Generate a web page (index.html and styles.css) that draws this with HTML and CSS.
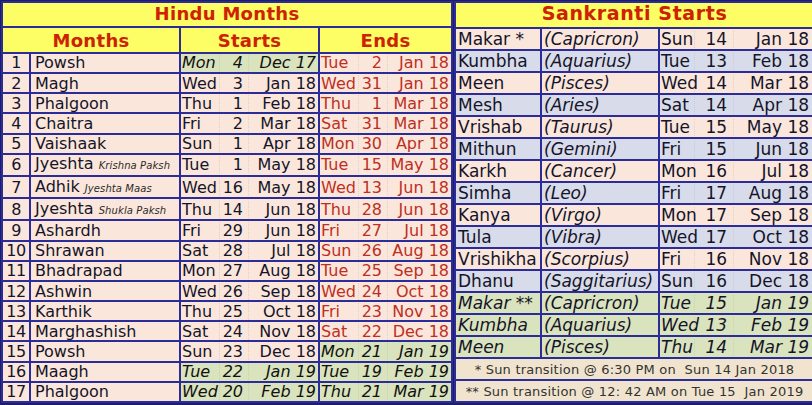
FILE: index.html
```html
<!DOCTYPE html>
<html>
<head>
<meta charset="utf-8">
<link rel="stylesheet" href="styles.css">
</head>
<body>
<div class="sheet">
  <table class="months">
    <colgroup><col class="c-no"><col class="c-name"><col class="c-start"><col class="c-end"></colgroup>
    <tr class="title"><td colspan="4">Hindu Months</td></tr>
    <tr class="head"><td colspan="2">Months</td><td>Starts</td><td>Ends</td></tr>
    <tr><td class="no">1</td><td class="name">Powsh</td><td class="dt green"><div class="d"><span>Mon</span><span>4</span><span>Dec 17</span></div></td><td class="dt end"><div class="d"><span>Tue</span><span>2</span><span>Jan 18</span></div></td></tr>
    <tr><td class="no">2</td><td class="name">Magh</td><td class="dt"><div class="d"><span>Wed</span><span>3</span><span>Jan 18</span></div></td><td class="dt end"><div class="d"><span>Wed</span><span>31</span><span>Jan 18</span></div></td></tr>
    <tr><td class="no">3</td><td class="name">Phalgoon</td><td class="dt"><div class="d"><span>Thu</span><span>1</span><span>Feb 18</span></div></td><td class="dt end"><div class="d"><span>Thu</span><span>1</span><span>Mar 18</span></div></td></tr>
    <tr><td class="no">4</td><td class="name">Chaitra</td><td class="dt"><div class="d"><span>Fri</span><span>2</span><span>Mar 18</span></div></td><td class="dt end"><div class="d"><span>Sat</span><span>31</span><span>Mar 18</span></div></td></tr>
    <tr><td class="no">5</td><td class="name">Vaishaak</td><td class="dt"><div class="d"><span>Sun</span><span>1</span><span>Apr 18</span></div></td><td class="dt end"><div class="d"><span>Mon</span><span>30</span><span>Apr 18</span></div></td></tr>
    <tr><td class="no">6</td><td class="name">Jyeshta <small>Krishna Paksh</small></td><td class="dt"><div class="d"><span>Tue</span><span>1</span><span>May 18</span></div></td><td class="dt end"><div class="d"><span>Tue</span><span>15</span><span>May 18</span></div></td></tr>
    <tr><td class="no">7</td><td class="name">Adhik <small>Jyeshta Maas</small></td><td class="dt"><div class="d"><span>Wed</span><span>16</span><span>May 18</span></div></td><td class="dt end"><div class="d"><span>Wed</span><span>13</span><span>Jun 18</span></div></td></tr>
    <tr><td class="no">8</td><td class="name">Jyeshta <small>Shukla Paksh</small></td><td class="dt"><div class="d"><span>Thu</span><span>14</span><span>Jun 18</span></div></td><td class="dt end"><div class="d"><span>Thu</span><span>28</span><span>Jun 18</span></div></td></tr>
    <tr><td class="no">9</td><td class="name">Ashardh</td><td class="dt"><div class="d"><span>Fri</span><span>29</span><span>Jun 18</span></div></td><td class="dt end"><div class="d"><span>Fri</span><span>27</span><span>Jul 18</span></div></td></tr>
    <tr><td class="no">10</td><td class="name">Shrawan</td><td class="dt"><div class="d"><span>Sat</span><span>28</span><span>Jul 18</span></div></td><td class="dt end"><div class="d"><span>Sun</span><span>26</span><span>Aug 18</span></div></td></tr>
    <tr><td class="no">11</td><td class="name">Bhadrapad</td><td class="dt"><div class="d"><span>Mon</span><span>27</span><span>Aug 18</span></div></td><td class="dt end"><div class="d"><span>Tue</span><span>25</span><span>Sep 18</span></div></td></tr>
    <tr><td class="no">12</td><td class="name">Ashwin</td><td class="dt"><div class="d"><span>Wed</span><span>26</span><span>Sep 18</span></div></td><td class="dt end"><div class="d"><span>Wed</span><span>24</span><span>Oct 18</span></div></td></tr>
    <tr><td class="no">13</td><td class="name">Karthik</td><td class="dt"><div class="d"><span>Thu</span><span>25</span><span>Oct 18</span></div></td><td class="dt end"><div class="d"><span>Fri</span><span>23</span><span>Nov 18</span></div></td></tr>
    <tr><td class="no">14</td><td class="name">Marghashish</td><td class="dt"><div class="d"><span>Sat</span><span>24</span><span>Nov 18</span></div></td><td class="dt end"><div class="d"><span>Sat</span><span>22</span><span>Dec 18</span></div></td></tr>
    <tr><td class="no">15</td><td class="name">Powsh</td><td class="dt"><div class="d"><span>Sun</span><span>23</span><span>Dec 18</span></div></td><td class="dt green"><div class="d"><span>Mon</span><span>21</span><span>Jan 19</span></div></td></tr>
    <tr><td class="no">16</td><td class="name">Maagh</td><td class="dt green"><div class="d"><span>Tue</span><span>22</span><span>Jan 19</span></div></td><td class="dt green"><div class="d"><span>Tue</span><span>19</span><span>Feb 19</span></div></td></tr>
    <tr><td class="no">17</td><td class="name">Phalgoon</td><td class="dt green"><div class="d"><span>Wed</span><span>20</span><span>Feb 19</span></div></td><td class="dt green"><div class="d"><span>Thu</span><span>21</span><span>Mar 19</span></div></td></tr>
  </table>

  <table class="sank">
    <colgroup><col class="s-name"><col class="s-sign"><col class="s-date"></colgroup>
    <tr class="title"><td colspan="3" class="wide">Sankranti Starts</td></tr>
    <tr class="pink"><td class="nm">Makar *</td><td class="sg">(Capricron)</td><td class="dt"><div class="d"><span>Sun</span><span>14</span><span>Jan 18</span></div></td></tr>
    <tr class="blue"><td class="nm">Kumbha</td><td class="sg">(Aquarius)</td><td class="dt"><div class="d"><span>Tue</span><span>13</span><span>Feb 18</span></div></td></tr>
    <tr class="pink"><td class="nm">Meen</td><td class="sg">(Pisces)</td><td class="dt"><div class="d"><span>Wed</span><span>14</span><span>Mar 18</span></div></td></tr>
    <tr class="blue"><td class="nm">Mesh</td><td class="sg">(Aries)</td><td class="dt"><div class="d"><span>Sat</span><span>14</span><span>Apr 18</span></div></td></tr>
    <tr class="pink"><td class="nm">Vrishab</td><td class="sg">(Taurus)</td><td class="dt"><div class="d"><span>Tue</span><span>15</span><span>May 18</span></div></td></tr>
    <tr class="blue"><td class="nm">Mithun</td><td class="sg">(Gemini)</td><td class="dt"><div class="d"><span>Fri</span><span>15</span><span>Jun 18</span></div></td></tr>
    <tr class="pink"><td class="nm">Karkh</td><td class="sg">(Cancer)</td><td class="dt"><div class="d"><span>Mon</span><span>16</span><span>Jul 18</span></div></td></tr>
    <tr class="blue"><td class="nm">Simha</td><td class="sg">(Leo)</td><td class="dt"><div class="d"><span>Fri</span><span>17</span><span>Aug 18</span></div></td></tr>
    <tr class="pink"><td class="nm">Kanya</td><td class="sg">(Virgo)</td><td class="dt"><div class="d"><span>Mon</span><span>17</span><span>Sep 18</span></div></td></tr>
    <tr class="blue"><td class="nm">Tula</td><td class="sg">(Vibra)</td><td class="dt"><div class="d"><span>Wed</span><span>17</span><span>Oct 18</span></div></td></tr>
    <tr class="pink"><td class="nm">Vrishikha</td><td class="sg">(Scorpius)</td><td class="dt"><div class="d"><span>Fri</span><span>16</span><span>Nov 18</span></div></td></tr>
    <tr class="blue"><td class="nm">Dhanu</td><td class="sg">(Saggitarius)</td><td class="dt"><div class="d"><span>Sun</span><span>16</span><span>Dec 18</span></div></td></tr>
    <tr class="greenrow"><td class="nm">Makar **</td><td class="sg">(Capricron)</td><td class="dt"><div class="d"><span>Tue</span><span>15</span><span>Jan 19</span></div></td></tr>
    <tr class="greenrow"><td class="nm">Kumbha</td><td class="sg">(Aquarius)</td><td class="dt"><div class="d"><span>Wed</span><span>13</span><span>Feb 19</span></div></td></tr>
    <tr class="greenrow"><td class="nm">Meen</td><td class="sg">(Pisces)</td><td class="dt"><div class="d"><span>Thu</span><span>14</span><span>Mar 19</span></div></td></tr>
    <tr class="note"><td colspan="3">* Sun transition @ 6:30 PM on&nbsp; Sun 14 Jan 2018</td></tr>
    <tr class="note"><td colspan="3">** Sun transition @ 12: 42 AM on Tue 15&nbsp; Jan 2019</td></tr>
  </table>
</div>
</body>
</html>
```
FILE: styles.css
```css
html, body {
  margin: 0;
  padding: 0;
  background: #1e1e66;
}

.sheet {
  display: flex;
  align-items: flex-start;
  gap: 1px;
  width: 812px;
  height: 405px;
  box-sizing: border-box;
  padding: 1px 1px 2px 1px;
  background: #1e1e66;
  font-family: "DejaVu Sans", Verdana, sans-serif;
  color: #14142a;
  overflow: hidden;
}

table {
  border-collapse: collapse;
  table-layout: fixed;
}

td {
  border: 2px solid #2c2c98;
  padding: 0;
  white-space: nowrap;
  overflow: hidden;
  vertical-align: middle;
  line-height: 17px;
}

/* ---------- left table ---------- */
.months {
  width: 450px;
  height: 402px;
  font-size: 16px;
}
.c-no { width: 28px; }
.c-name { width: 150px; }
.c-start { width: 139px; }
.c-end { width: 133px; }

.months tr { height: 19px; }

.title td, .head td {
  background: #fdfd66;
  color: #cc2200;
  font-weight: bold;
  font-size: 18px;
  letter-spacing: 0.3px;
  text-align: center;
}
.months .title { height: 24px; }
.months .head { height: 24px; }
.title td { vertical-align: top; padding-top: 2px; }
.title td.wide { letter-spacing: 0.6px; font-size: 19px; padding-top: 2px; }

.no {
  background: #fbe6dc;
  text-align: center;
  letter-spacing: -0.5px;
}
.name {
  background: #fbe6dc;
  padding-left: 4px;
}
.name small {
  font-size: 10px;
  font-style: italic;
  color: #2a2a2a;
  letter-spacing: 0.1px;
}

.dt {
  background: #fbe6dc;
}
.d {
  display: grid;
  grid-template-columns: 39px 29px 1fr;
}
.d span {
  display: block;
}
.d span:nth-child(1) {
  padding-left: 1px;
  border-right: 1px dotted #dcd2c8;
}
.d span:nth-child(2) {
  text-align: right;
  padding-right: 5px;
  border-right: 1px dotted #dcd2c8;
}
.d span:nth-child(3) {
  text-align: right;
  padding-right: 2px;
}

.end {
  color: #bd2f1e;
}

.green {
  background: #d9e3bd;
  color: #111;
  font-style: italic;
}
.green .d span { border-color: #c8d2ae; }

/* ---------- right table ---------- */
.sank {
  width: 359px;
  font-size: 17px;
}
.s-name { width: 86px; }
.s-sign { width: 118px; }
.s-date { width: 155px; }

.sank tr { height: 22px; }
.sank .title { height: 26px; }

.nm {
  padding-left: 2px;
}
.sg {
  padding-left: 2px;
  font-style: italic;
}
.sank .d {
  grid-template-columns: 35px 39px 1fr;
}
.sank .d span:nth-child(2) { padding-right: 6px; }
.sank .d span:nth-child(3) { padding-right: 4px; }

.pink td { background: #fbe6dc; }
.blue td { background: #d8dbe9; }
.blue .d span { border-color: #c6cadb; }
.greenrow td { background: #d9e3bd; font-style: italic; }
.greenrow .d span { border-color: #c8d2ae; }

.note td {
  background: #f1e4cf;
  color: #333;
  font-size: 13px;
  text-align: center;
  letter-spacing: 0.2px;
}
```
